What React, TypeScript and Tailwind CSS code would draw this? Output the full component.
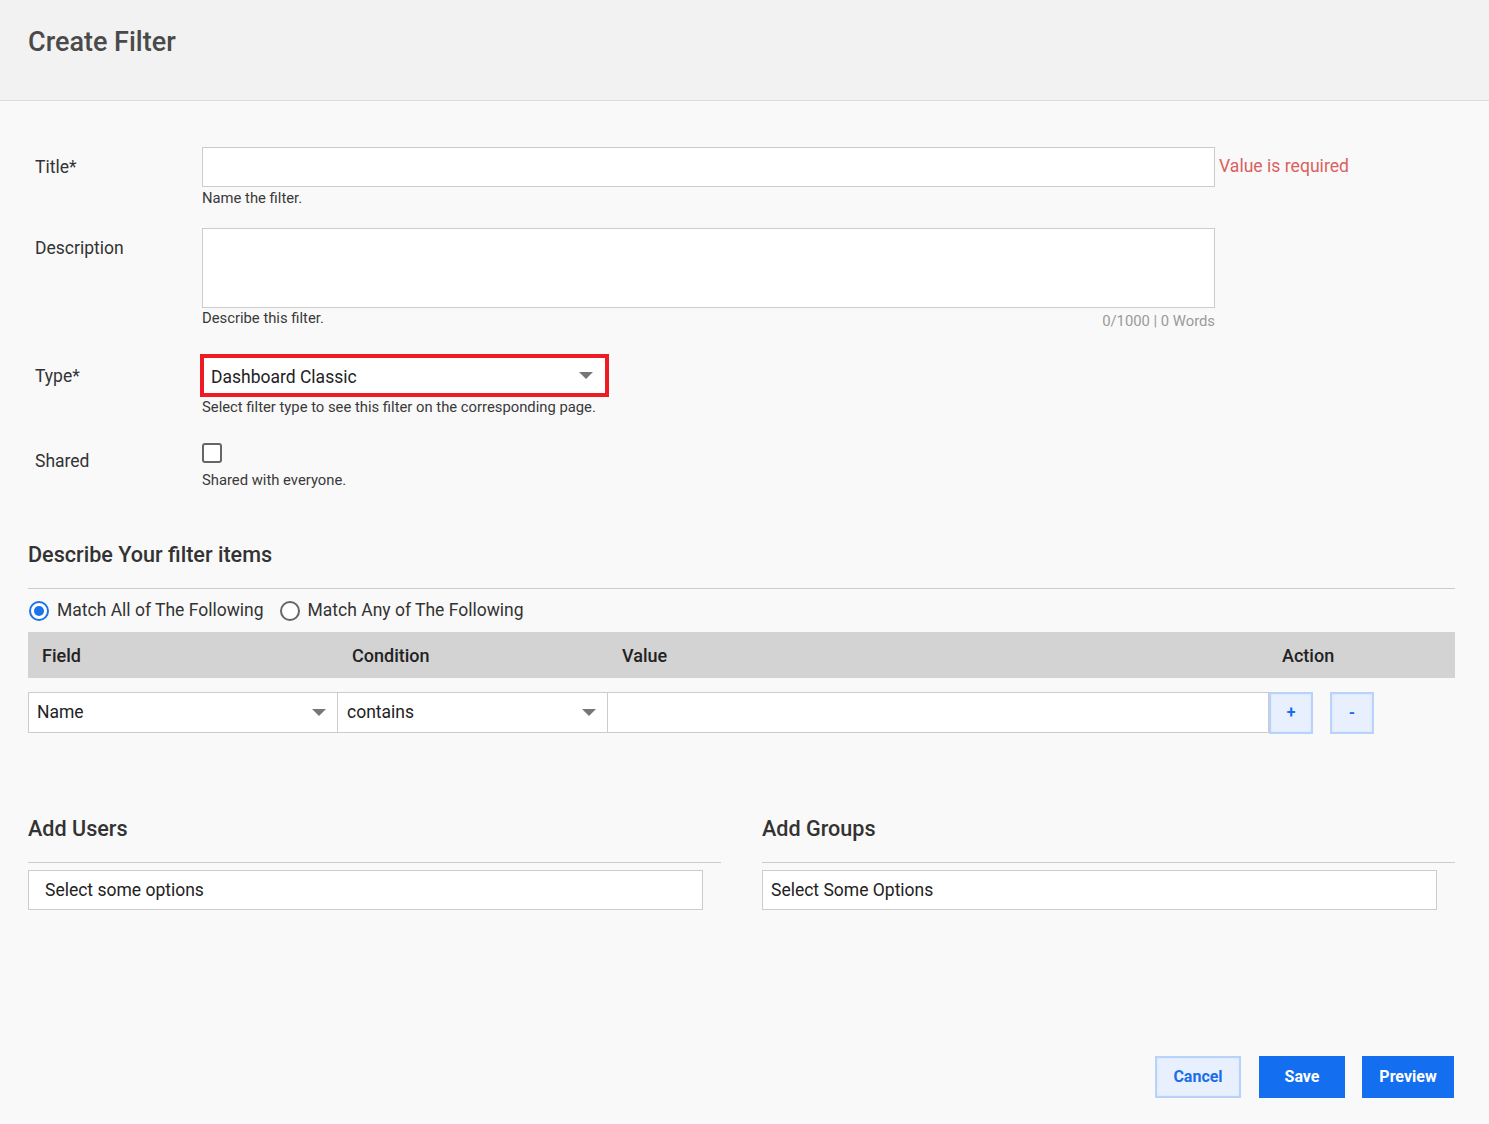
import React from "react";

function Caret() {
  return (
    <svg width="14" height="8" viewBox="0 0 14 8" className="shrink-0">
      <path d="M0 0 L14 0 L7 7 Z" fill="#777" />
    </svg>
  );
}

function FormRow({ label, labelLead, children, className }: { label: string; labelLead: string; children: React.ReactNode; className?: string }) {
  return (
    <div className={"flex " + (className || "")}>
      <div className={"w-[167px] shrink-0 text-[17.5px] text-[#333] " + labelLead}>{label}</div>
      <div className="flex-1">{children}</div>
    </div>
  );
}

function Hint({ children }: { children: React.ReactNode }) {
  return <div className="text-[14.8px] leading-[18px] text-[#3a3a3a]">{children}</div>;
}

function LightButton({ children, className }: { children: React.ReactNode; className?: string }) {
  return (
    <button className={"flex items-center justify-center border-2 border-[#b8d2fa] bg-[#e8f0fe] text-[#1a6ee8] font-bold shadow-[inset_0_0_2px_#c9ddfb] " + (className || "")}>
      {children}
    </button>
  );
}

export default function App() {
  return (
    <div className="min-h-[1124px] bg-[#f9f9f9] font-['Roboto',sans-serif] text-[#333]">
      <div className="h-[101px] border-b border-[#dddddd] bg-[#f2f2f2] pl-[28px] pt-[24px]">
        <h1 className="text-[27px] leading-[36px] font-medium text-[#4a4a4a]">Create Filter</h1>
      </div>

      <div className="pt-[46px] pl-[35px]">
        <FormRow label="Title*" labelLead="leading-[40px]">
          <div className="flex items-start">
            <div className="w-[1013px]">
              <div className="h-[40px] border border-[#cccccc] bg-white" />
              <div className="mt-[2px]">
                <Hint>Name the filter.</Hint>
              </div>
            </div>
            <div className="ml-[4px] text-[17.6px] leading-[38px] text-[#d9625e]">Value is required</div>
          </div>
        </FormRow>

        <FormRow label="Description" labelLead="leading-[40px]" className="mt-[21px]">
          <div className="w-[1013px]">
            <div className="h-[80px] border border-[#cccccc] bg-white" />
            <div className="mt-[1px] flex h-[18px] items-start justify-between">
              <Hint>Describe this filter.</Hint>
              <div className="pt-[3px] text-[14.8px] leading-[18px] text-[#999]">0/1000 | 0 Words</div>
            </div>
          </div>
        </FormRow>

        <FormRow label="Type*" labelLead="leading-[45px]" className="mt-[27px]">
          <div className="-ml-[2px] flex h-[43px] w-[409px] items-center justify-between border-[4px] border-[#ed1c24] bg-white pl-[7px] pr-[12px]">
            <span className="pt-[3px] text-[17.5px] text-[#222]">Dashboard Classic</span>
            <Caret />
          </div>
          <div className="mt-[1px]">
            <Hint>Select filter type to see this filter on the corresponding page.</Hint>
          </div>
        </FormRow>

        <FormRow label="Shared" labelLead="leading-[36px]" className="mt-[27px]">
          <div className="h-[20px] w-[20px] rounded-[3px] border-2 border-[#666] bg-white" />
          <div className="mt-[8px]">
            <Hint>Shared with everyone.</Hint>
          </div>
        </FormRow>
      </div>

      <div className="pl-[28px] pr-[34px] pt-[51px]">
        <h2 className="text-[21.6px] leading-[30px] font-medium text-[#333]">Describe Your filter items</h2>
        <div className="mt-[18px] border-t border-[#cccccc]" />
        <div className="flex h-[43px] items-center pl-[1px] text-[17.5px] text-[#333]">
          <label className="flex items-center">
            <span className="flex h-[20px] w-[20px] items-center justify-center rounded-full border-2 border-[#1a73e8] bg-white">
              <span className="h-[10px] w-[10px] rounded-full bg-[#1a73e8]" />
            </span>
            <span className="ml-[8px]">Match All of The Following</span>
          </label>
          <label className="ml-[16px] flex items-center">
            <span className="h-[20px] w-[20px] rounded-full border-2 border-[#666] bg-white" />
            <span className="ml-[8px]">Match Any of The Following</span>
          </label>
        </div>

        <div className="flex h-[46px] items-center bg-[#d3d3d3] text-[18px] font-medium text-[#222]">
          <div className="w-[310px] pl-[14px]">Field</div>
          <div className="w-[270px] pl-[14px]">Condition</div>
          <div className="w-[661px] pl-[14px]">Value</div>
          <div className="pl-[13px]">Action</div>
        </div>

        <div className="mt-[14px] flex items-start">
          <div className="flex h-[41px] w-[310px] items-center justify-between border border-[#cccccc] bg-white pl-[8px] pr-[11px]">
            <span className="text-[17.5px] text-[#222]">Name</span>
            <Caret />
          </div>
          <div className="flex h-[41px] w-[270px] items-center justify-between border border-l-0 border-[#cccccc] bg-white pl-[9px] pr-[11px]">
            <span className="text-[17.5px] text-[#222]">contains</span>
            <Caret />
          </div>
          <div className="h-[41px] w-[661px] border border-l-0 border-[#cccccc] bg-white" />
          <LightButton className="h-[42px] w-[44px] text-[16px]">+</LightButton>
          <LightButton className="ml-[17px] h-[42px] w-[44px] text-[16px]">-</LightButton>
        </div>

        <div className="mt-[80px] flex gap-[41px]">
          <div className="w-[693px]">
            <h2 className="text-[21.6px] leading-[30px] font-medium text-[#333]">Add Users</h2>
            <div className="mt-[18px] border-t border-[#cccccc]" />
            <div className="mt-[7px] flex h-[40px] w-[675px] items-center border border-[#cccccc] bg-white pl-[16px] text-[17.5px] text-[#222]">
              Select some options
            </div>
          </div>
          <div className="w-[693px]">
            <h2 className="text-[21.6px] leading-[30px] font-medium text-[#333]">Add Groups</h2>
            <div className="mt-[18px] border-t border-[#cccccc]" />
            <div className="mt-[7px] flex h-[40px] w-[675px] items-center border border-[#cccccc] bg-white pl-[8px] text-[17.5px] text-[#222]">
              Select Some Options
            </div>
          </div>
        </div>

        <div className="mt-[146px] flex justify-end pr-[1px] pb-[26px]">
          <LightButton className="h-[42px] w-[86px] text-[16px]">Cancel</LightButton>
          <button className="ml-[18px] h-[42px] w-[86px] bg-[#146ef0] text-[16px] font-bold text-white">Save</button>
          <button className="ml-[17px] h-[42px] w-[92px] bg-[#146ef0] text-[16px] font-bold text-white">Preview</button>
        </div>
      </div>
    </div>
  );
}
